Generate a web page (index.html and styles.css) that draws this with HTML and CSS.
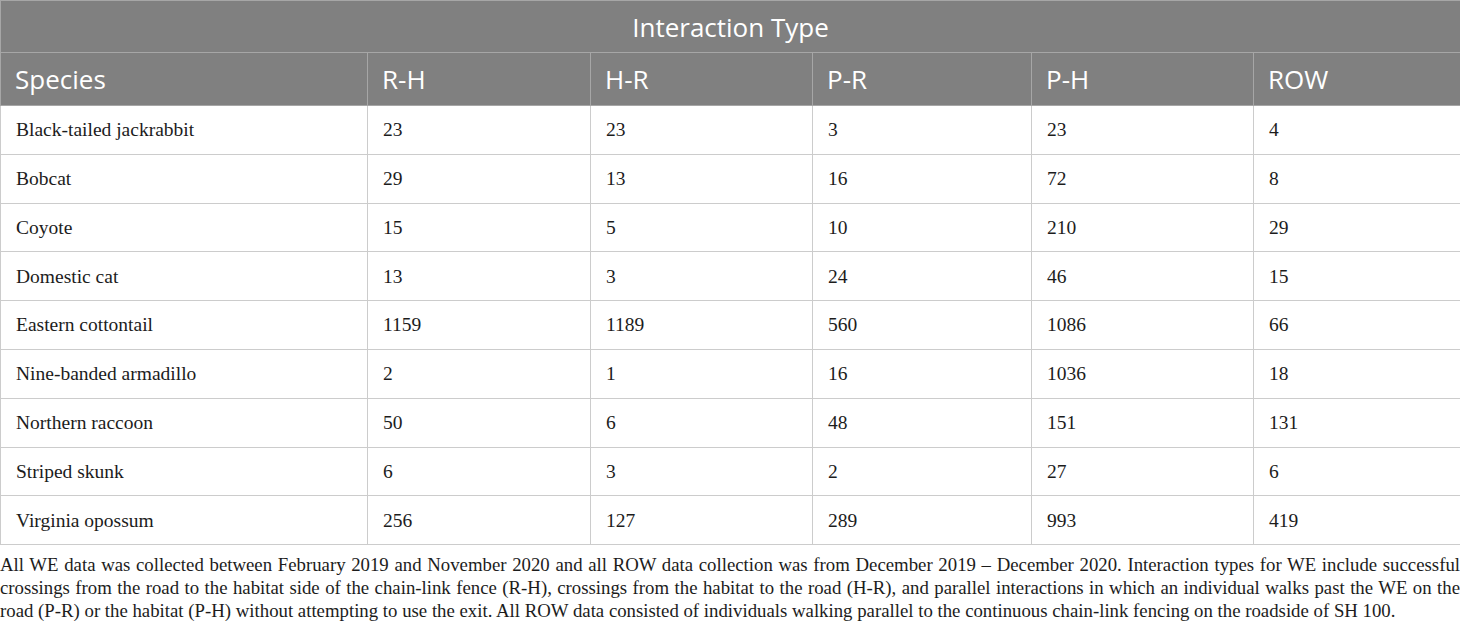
FILE: index.html
```html
<!DOCTYPE html>
<html lang="en">
<head>
<meta charset="utf-8">
<title>Interaction Type</title>
<link rel="stylesheet" href="styles.css">
</head>
<body>
<div class="wrap">
<table class="data">
  <colgroup>
    <col class="c-species">
    <col class="c-rh">
    <col class="c-hr">
    <col class="c-pr">
    <col class="c-ph">
    <col class="c-row">
  </colgroup>
  <thead>
    <tr class="top"><th colspan="6" class="group">Interaction Type</th></tr>
    <tr class="sub">
      <th>Species</th><th>R-H</th><th>H-R</th><th>P-R</th><th>P-H</th><th>ROW</th>
    </tr>
  </thead>
  <tbody>
    <tr><td>Black-tailed jackrabbit</td><td>23</td><td>23</td><td>3</td><td>23</td><td>4</td></tr>
    <tr><td>Bobcat</td><td>29</td><td>13</td><td>16</td><td>72</td><td>8</td></tr>
    <tr><td>Coyote</td><td>15</td><td>5</td><td>10</td><td>210</td><td>29</td></tr>
    <tr><td>Domestic cat</td><td>13</td><td>3</td><td>24</td><td>46</td><td>15</td></tr>
    <tr><td>Eastern cottontail</td><td>1159</td><td>1189</td><td>560</td><td>1086</td><td>66</td></tr>
    <tr><td>Nine-banded armadillo</td><td>2</td><td>1</td><td>16</td><td>1036</td><td>18</td></tr>
    <tr><td>Northern raccoon</td><td>50</td><td>6</td><td>48</td><td>151</td><td>131</td></tr>
    <tr><td>Striped skunk</td><td>6</td><td>3</td><td>2</td><td>27</td><td>6</td></tr>
    <tr><td>Virginia opossum</td><td>256</td><td>127</td><td>289</td><td>993</td><td>419</td></tr>
  </tbody>
</table>
<p class="note">All WE data was collected between February 2019 and November 2020 and all ROW data collection was from December 2019 – December 2020. Interaction types for WE include successful crossings from the road to the habitat side of the chain-link fence (R-H), crossings from the habitat to the road (H-R), and parallel interactions in which an individual walks past the WE on the road (P-R) or the habitat (P-H) without attempting to use the exit. All ROW data consisted of individuals walking parallel to the continuous chain-link fencing on the roadside of SH 100.</p>
</div>
</body>
</html>
```

FILE: styles.css
```css
html, body {
  margin: 0;
  padding: 0;
  background: #ffffff;
}

.wrap {
  width: 1460px;
}

.data {
  width: 1460px;
  border-collapse: collapse;
  table-layout: fixed;
  font-family: "Liberation Serif", "Times New Roman", serif;
  font-size: 19.5px;
  color: #1c1c1c;
}

.c-species { width: 367px; }
.c-rh { width: 223px; }
.c-hr { width: 222px; }
.c-pr { width: 219px; }
.c-ph { width: 222px; }
.c-row { width: 207px; }

.data th {
  background: #808080;
  color: #ffffff;
  font-family: "Open Sans", "Noto Sans", sans-serif;
  font-weight: 400;
  font-size: 26px;
  text-align: left;
  padding: 0 0 0 14px;
  border: 1px solid #a6a6a6;
}

.data tr.top th {
  height: 51px;
  text-align: center;
  padding: 0;
  line-height: 1;
}

.data tr.sub th {
  height: 52px;
  line-height: 1;
}

.data td {
  height: 47.8px;
  padding: 0 0 0 15px;
  border: 1px solid #cccccc;
  vertical-align: middle;
  line-height: 1;
}

.note {
  margin: 8px 0 0;
  font-family: "Liberation Serif", "Times New Roman", serif;
  font-size: 18.8px;
  line-height: 23px;
  text-align: justify;
  color: #1c1c1c;
}
```
